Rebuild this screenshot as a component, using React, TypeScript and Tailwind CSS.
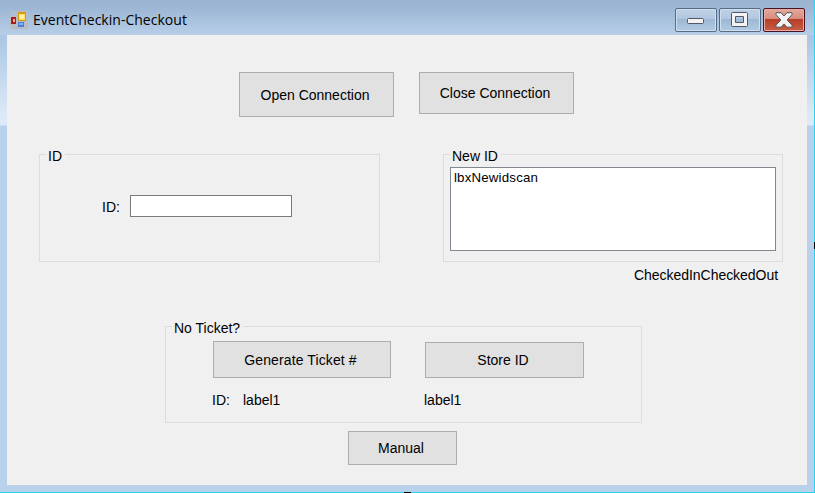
import type { ReactNode } from 'react';

function Button({ className, children }: { className: string; children: ReactNode }) {
  return (
    <button type="button" className={`flex shrink-0 items-center justify-center border border-[#adadad] bg-[#e1e1e1] pr-[3px] leading-4 ${className}`}>
      {children}
    </button>
  );
}

function Group({ title, className, children }: { title: string; className: string; children: ReactNode }) {
  return (
    <section className={`flex shrink-0 flex-col border border-[#dcdcdc] ${className}`}>
      <h2 className="-mt-[7px] ml-[6px] h-4 self-start bg-[#f0f0f0] pr-[3px] pl-[2px] leading-4">{title}</h2>
      {children}
    </section>
  );
}

function FormIcon() {
  return (
    <svg width="18" height="18" viewBox="0 0 18 18" shapeRendering="crispEdges">
      <rect width="18" height="18" fill="#b9bcc3" />
      <rect x="1" y="1" width="5" height="4" fill="#a9bfdb" />
      <rect x="1" y="6" width="5" height="7" fill="#ad1c16" />
      <rect x="3" y="8" width="2" height="3" fill="#efa79b" />
      <rect x="8" y="1" width="8" height="9" fill="#d39b13" />
      <rect x="9" y="3" width="6" height="6" fill="#ffdf68" />
      <rect x="10" y="4" width="4" height="4" fill="#fff1a8" />
      <rect x="8" y="11" width="6" height="5" fill="#477fdc" />
      <rect x="9" y="12" width="4" height="2" fill="#80b1f4" />
    </svg>
  );
}

function CaptionButtons() {
  return (
    <div className="flex gap-[2px]">
      <div className="flex h-6 w-[42px] items-center justify-center rounded-[2px] border border-[#586b85] bg-[linear-gradient(to_bottom,#bdd0e5_0%,#b2c8e0_45%,#9db8d4_46%,#b2cae3_100%)] shadow-[inset_0_0_0_1px_#d1e0ef]">
        <svg width="17" height="6" className="-ml-px mt-[2px]">
          <rect x=".5" y=".5" width="16" height="5" rx="1" fill="#f3f3f3" stroke="#535666" />
        </svg>
      </div>
      <div className="flex h-6 w-[42px] items-center justify-center rounded-[2px] border border-[#586b85] bg-[linear-gradient(to_bottom,#bdd0e5_0%,#b2c8e0_45%,#9db8d4_46%,#b2cae3_100%)] shadow-[inset_0_0_0_1px_#d1e0ef]">
        <svg width="17" height="15" className="-ml-px -mt-px">
          <path d="M1.5 .5h14a1 1 0 0 1 1 1v12a1 1 0 0 1-1 1h-14a1 1 0 0 1-1-1v-12a1 1 0 0 1 1-1ZM4.5 4.5v6h8v-6Z" fill="#f3f3f3" fillRule="evenodd" stroke="#535666" />
        </svg>
      </div>
      <div className="flex h-6 w-[42px] items-center justify-center rounded-[2px] border border-[#4c1122] bg-[linear-gradient(to_bottom,#e6a99d_0%,#d68b7c_45%,#b83d25_46%,#c95e46_100%)] shadow-[inset_0_0_0_1px_#e5aea4]">
        <svg width="18" height="16" viewBox="0 0 18 16" className="-ml-px -mt-px">
          <path d="M1 .7h5L9 4l3-3.3h5v2L12.2 8l4.8 5.2v2h-5L9 11.9l-3 3.3H1v-2L5.8 8 1 2.7Z" fill="#f3f3f3" stroke="#535666" strokeLinejoin="round" />
        </svg>
      </div>
    </div>
  );
}

export default function App() {
  return (
    <div className="relative h-[493px] w-[815px] overflow-hidden bg-[#2dd2ed] pr-px pb-px font-['Liberation_Sans',Arial,sans-serif] text-[14px] text-black">
      <div className="flex h-full flex-col bg-[linear-gradient(to_bottom,#99b4d1_0px,#b9d1ea_60px,#dce9f6_115px,#dce9f6_125px,#b9d1ea_126px)]">
        <header className="flex h-[35px] shrink-0 items-start bg-[linear-gradient(to_bottom,#99b4d1,#9db7d4_8px,#b7cee8)] pl-[10px]">
          <div className="mt-[11px] shrink-0"><FormIcon /></div>
          <h1 className="mt-[11px] ml-[5px] font-['Open_Sans','Noto_Sans',sans-serif] text-[14px] leading-[18px] tracking-[0.02px] whitespace-nowrap">EventCheckin-Checkout</h1>
          <div className="mt-2 mr-[9px] ml-auto"><CaptionButtons /></div>
        </header>
        <main className="mx-[7px] flex h-[450px] shrink-0 flex-col bg-[#f0f0f0]">
          <div className="flex h-[119px] items-start gap-[25px] pt-[37px] pl-[232px]">
            <Button className="h-[45px] w-[155px] pt-px">Open Connection</Button>
            <Button className="h-[42px] w-[155px]">Close Connection</Button>
          </div>
          <div className="flex h-[108px] gap-[63px] pl-8">
            <Group title="ID" className="h-[108px] w-[341px]">
              <label className="mt-[31px] ml-[62px] flex items-center">
                <span className="w-7 pt-[2px] leading-4">ID:</span>
                <input className="h-[22px] w-[162px] border border-[#7a7a7a] bg-white px-1 outline-none" />
              </label>
            </Group>
            <Group title="New ID" className="h-[108px] w-[340px]">
              <div className="mt-[3px] ml-[6px] h-[84px] w-[326px] border border-[#828790] bg-white px-[3px] pt-[2px] text-[13.3px] leading-4 tracking-[0.17px]">lbxNewidscan</div>
            </Group>
          </div>
          <div className="mt-[5px] mr-[29px] h-4 self-end leading-4 tracking-[-0.04px]">CheckedInCheckedOut</div>
          <Group title="No Ticket?" className="mt-[43px] ml-[158px] h-[97px] w-[477px]">
            <div className="mt-[5px] ml-[47px] flex items-end gap-[34px]">
              <Button className="h-[37px] w-[178px] pt-px tracking-[0.12px]">Generate Ticket #</Button>
              <Button className="h-9 w-[159px]">Store ID</Button>
            </div>
            <div className="mt-[14px] ml-[46px] flex leading-4">
              <span className="w-[31px]">ID:</span>
              <span className="w-[181px]">label1</span>
              <span>label1</span>
            </div>
          </Group>
          <div className="mt-2 pl-[341px]">
            <Button className="h-[34px] w-[109px]">Manual</Button>
          </div>
        </main>
      </div>
      <div className="absolute top-[242px] right-0 h-[7px] w-px bg-black" />
      <div className="absolute bottom-0 left-[404px] h-px w-[7px] bg-black" />
    </div>
  );
}
